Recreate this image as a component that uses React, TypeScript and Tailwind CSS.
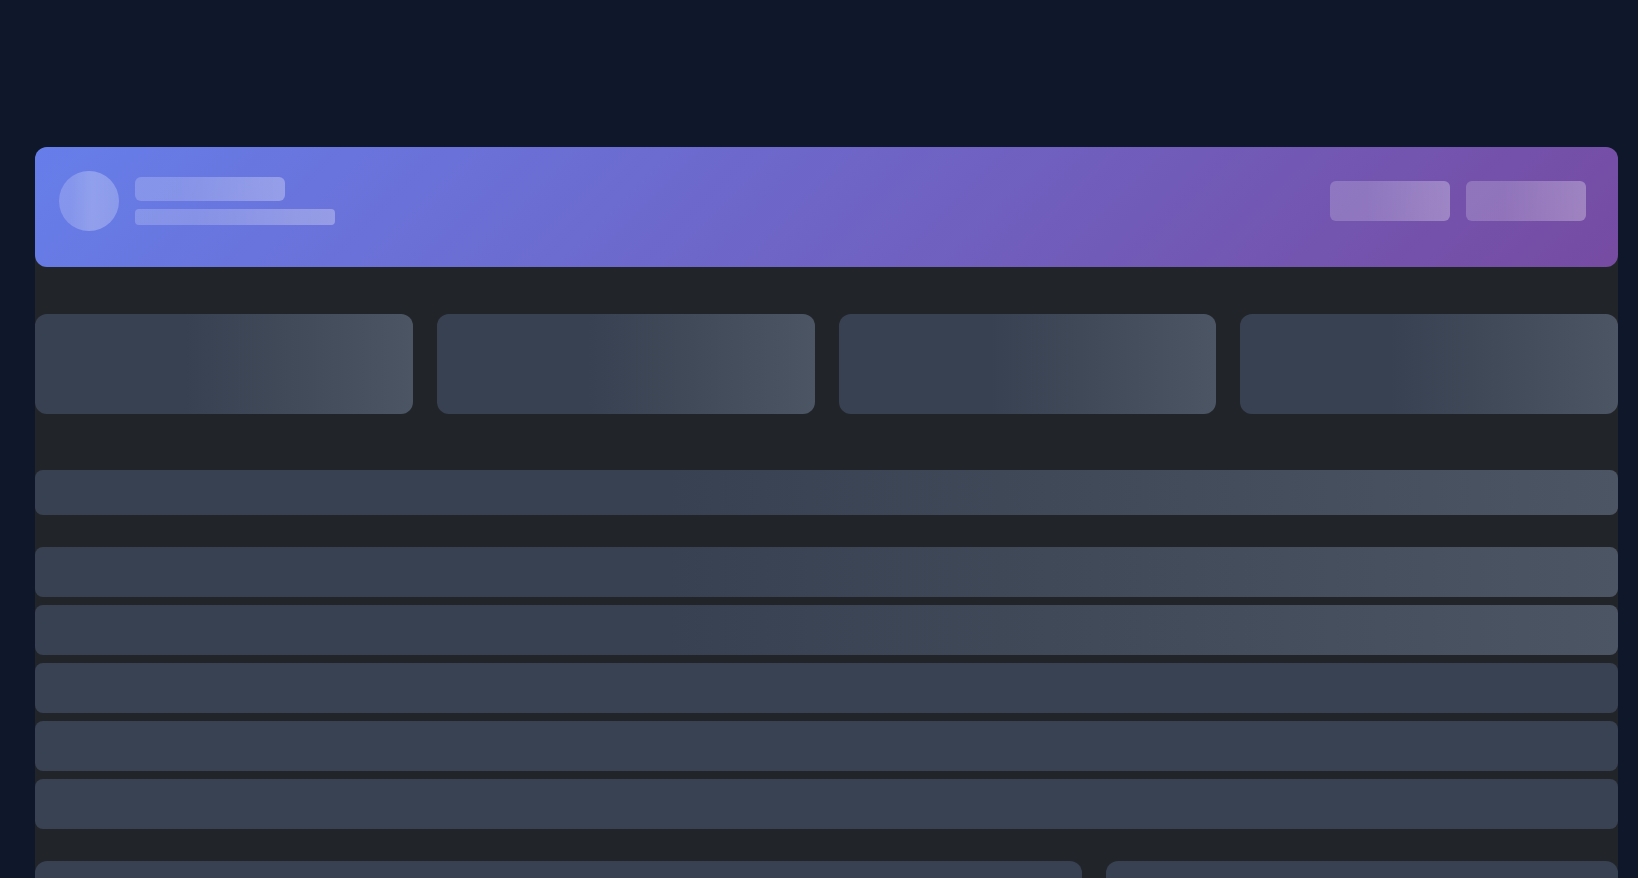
const Block = ({ className }: { className: string }) => <div className={className} />;

export default function App() {
  const shimmer = "bg-[linear-gradient(90deg,#374151_40%,#4b5563_100%)]";
  const light = "bg-[linear-gradient(90deg,rgba(255,255,255,0.2)_30%,rgba(255,255,255,0.3)_100%)]";

  return (
    <div className="min-h-screen bg-[#0f172a] pl-[35px] pr-[20px] pt-[147px] font-['Inter',sans-serif]">
      <div className="rounded-xl bg-[#212429]">
        {/* header */}
        <div className="flex h-[120px] items-start justify-between rounded-xl bg-[linear-gradient(135deg,#667eea_0%,#764ba2_100%)] pl-6 pr-8 pt-6">
          <div className="flex items-center gap-4">
            <Block className="h-[60px] w-[60px] rounded-full bg-[linear-gradient(90deg,rgba(255,255,255,0.2)_20%,rgba(255,255,255,0.28)_55%,rgba(255,255,255,0.24)_100%)]" />
            <div className="flex flex-col gap-2">
              <Block className={`h-6 w-[150px] rounded-md ${light}`} />
              <Block className={`h-4 w-[200px] rounded ${light}`} />
            </div>
          </div>
          <div className="mt-[10px] flex gap-4">
            <Block className={`h-10 w-[120px] rounded-md ${light}`} />
            <Block className={`h-10 w-[120px] rounded-md ${light}`} />
          </div>
        </div>

        {/* stat cards */}
        <div className="mt-[47px] grid grid-cols-4 gap-6">
          <Block className={`h-[100px] rounded-xl ${shimmer}`} />
          <Block className={`h-[100px] rounded-xl ${shimmer}`} />
          <Block className={`h-[100px] rounded-xl ${shimmer}`} />
          <Block className={`h-[100px] rounded-xl ${shimmer}`} />
        </div>

        {/* toolbar */}
        <Block className={`mt-14 h-[45px] rounded-lg ${shimmer}`} />

        {/* list rows */}
        <div className="mt-8 flex flex-col gap-2">
          <Block className={`h-[50px] rounded-lg ${shimmer}`} />
          <Block className={`h-[50px] rounded-lg ${shimmer}`} />
          <Block className="h-[50px] rounded-lg bg-[#394253]" />
          <Block className="h-[50px] rounded-lg bg-[#394253]" />
          <Block className="h-[50px] rounded-lg bg-[#394253]" />
        </div>

        {/* bottom panels */}
        <div className="mt-8 grid grid-cols-3 gap-6">
          <Block className="col-span-2 h-[300px] rounded-xl bg-[#374151]" />
          <Block className="h-[300px] rounded-xl bg-[#374151]" />
        </div>
      </div>
    </div>
  );
}
